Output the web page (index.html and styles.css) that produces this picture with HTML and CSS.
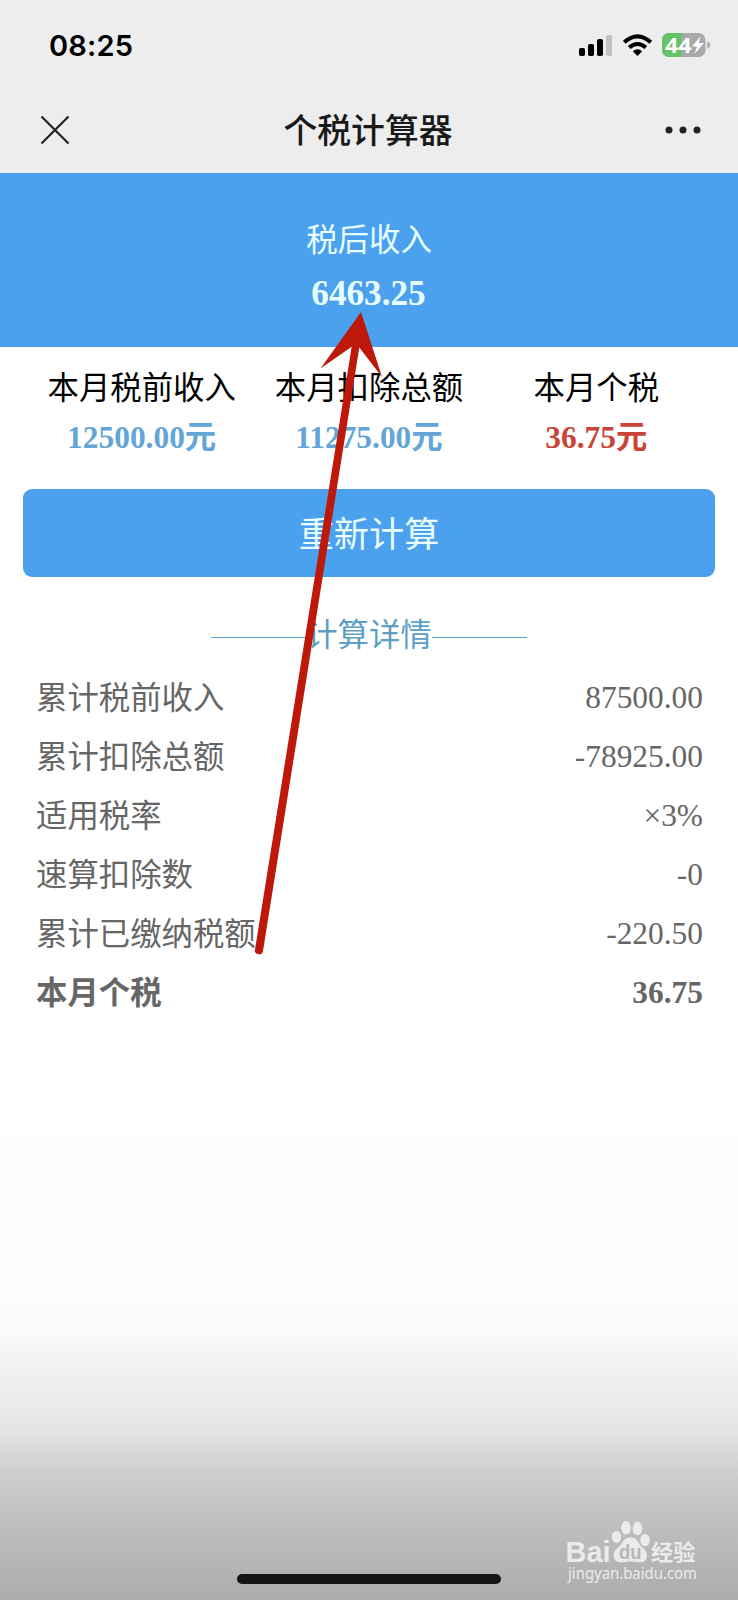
FILE: index.html
```html
<!DOCTYPE html>
<html lang="zh-CN">
<head>
<meta charset="utf-8">
<title>个税计算器</title>
<link rel="stylesheet" href="styles.css">
</head>
<body>
<div class="screen">
  <header class="header">
    <div class="status">
      <span class="time">08:25</span>
      <svg class="status-icons" width="134" height="30" viewBox="0 0 134 30">
        <rect x="1" y="18" width="6" height="8" rx="1.8"/>
        <rect x="10" y="14" width="6" height="12" rx="1.8"/>
        <rect x="19" y="9" width="6" height="17" rx="1.8"/>
        <rect x="28" y="5" width="6" height="21" rx="1.8" fill="#c2c2c2"/>
        <g fill="none" stroke="#000" stroke-width="4">
          <path d="M46.200 12.300Q59.500 .3 72.800 12.300"/>
          <path d="M51.200 17.600Q59.500 10.400 67.800 17.600"/>
        </g>
        <path d="M54.800 21.200Q59.500 17.500 64.200 21.200L59.500 26Z"/>
        <rect x="84" y="3" width="43.500" height="24" rx="7" fill="#a9a9a9"/>
        <path d="M103.500 3H91a7 7 0 0 0-7 7v10a7 7 0 0 0 7 7h12.500z" fill="#66c265"/>
        <path d="M129.300 11.300q3 1.200 3 3.700t-3 3.700z" fill="#a9a9a9"/>
        <text class="battery-text" x="87" y="22.600" textLength="26.500" lengthAdjust="spacingAndGlyphs">44</text>
        <path d="M122.500 6.500L114 16.500H119L116.500 24L126 13H120.800Z" fill="#fff"/>
      </svg>
    </div>
    <div class="navbar">
      <svg class="close" width="30" height="30" viewBox="0 0 30 30"><path d="M1.500 1.500L28.500 28.500M28.500 1.500L1.500 28.500" stroke="#222" stroke-width="2.200"/></svg>
      <h1 class="title">个税计算器</h1>
      <svg class="more" width="36" height="8" viewBox="0 0 36 8" fill="#222"><circle cx="4" cy="4" r="3.500"/><circle cx="18" cy="4" r="3.500"/><circle cx="32" cy="4" r="3.500"/></svg>
    </div>
  </header>
  <section class="income">
    <div class="income-label">税后收入</div>
    <div class="income-value">6463.25</div>
  </section>
  <main class="content">
    <div class="stats">
      <div class="stat"><span>本月税前收入</span><b>12500.00元</b></div>
      <div class="stat"><span>本月扣除总额</span><b>11275.00元</b></div>
      <div class="stat"><span>本月个税</span><b class="tax">36.75元</b></div>
    </div>
    <button class="recalc">重新计算</button>
    <div class="divider">计算详情</div>
    <div class="details">
      <div class="row"><span class="name">累计税前收入</span><span class="amount">87500.00</span></div>
      <div class="row"><span class="name">累计扣除总额</span><span class="amount">-78925.00</span></div>
      <div class="row"><span class="name">适用税率</span><span class="amount">×3%</span></div>
      <div class="row"><span class="name">速算扣除数</span><span class="amount">-0</span></div>
      <div class="row"><span class="name">累计已缴纳税额</span><span class="amount">-220.50</span></div>
      <div class="row total"><span class="name">本月个税</span><span class="amount">36.75</span></div>
    </div>
  </main>
  <svg class="arrow" width="738" height="1000" viewBox="0 0 738 1000"><path d="M361 312L382 377L359.300 347.500L263 951A4 4 0 0 1 255 949.500L351.700 346.700L320.500 368.500Z" fill="#bd1809"/></svg>
  <svg class="watermark" width="140" height="70" viewBox="0 0 140 70" fill="#ebebeb">
    <text class="brand" x="5.500" y="41.500" textLength="45" lengthAdjust="spacingAndGlyphs">Bai</text>
    <ellipse cx="56.500" cy="17" rx="4.700" ry="6"/>
    <ellipse cx="66" cy="7.800" rx="4.800" ry="6.700"/>
    <ellipse cx="77.500" cy="8.500" rx="4.800" ry="6.700"/>
    <ellipse cx="85" cy="20" rx="4.700" ry="6.200"/>
    <path d="M70.500 17.500C63 17.500 62.500 24 57.500 28C51 33 52.500 42.300 61 42.300C65 42.300 67 41.500 70.500 41.500C74 41.500 76 42.300 80 42.300C88.500 42.300 89 33.500 83.500 28.500C78 24 78 17.500 70.500 17.500Z"/>
    <text class="du" x="59" y="39" textLength="22.500" lengthAdjust="spacingAndGlyphs">du</text>
    <text class="experience" x="91" y="40" textLength="44.500" lengthAdjust="spacingAndGlyphs">经验</text>
    <text class="url" x="8" y="59" textLength="129" lengthAdjust="spacingAndGlyphs">jingyan.baidu.com</text>
  </svg>
  <div class="home-bar"></div>
</div>
</body>
</html>
```
FILE: styles.css
```css
* { box-sizing: border-box; }
body { margin: 0; }

.screen {
  position: relative;
  width: 738px;
  height: 1600px;
  overflow: hidden;
  display: flex;
  flex-direction: column;
  font-family: "Liberation Serif", "Noto Sans CJK SC", serif;
  font-size: 31.4px;
  background: linear-gradient(#fff 0, #fff 1020px, #fdfdfd 1290px, #fafafa 1330px, #f2f2f2 1365px, #e9e9e9 1410px, #e2e3e3 1434px, #dadcdb 1444px, #cfd1d1 1470px, #c5c6c6 1500px, #bababa 1542px, #acacac 1600px);
}

.header {
  height: 173px;
  background: #ededed;
  font-family: "Noto Sans CJK SC", sans-serif;
}

.status {
  height: 90px;
  padding: 0 26px 0 49px;
  display: flex;
  justify-content: space-between;
  align-items: center;
}

.time {
  padding-top: 2px;
  font: 600 29px/36px Inter, sans-serif;
  letter-spacing: .2px;
  color: #000;
}

.status-icons { display: block; }

.battery-text {
  font: 700 22px "Open Sans", sans-serif;
  fill: #fff;
}

.navbar {
  height: 80px;
  padding: 0 37px 0 40px;
  display: grid;
  grid-template-columns: 36px 1fr 36px;
  align-items: center;
}

.title {
  margin: -2px 0 0 -5px;
  font-size: 33.8px;
  line-height: 50px;
  font-weight: 500;
  text-align: center;
  color: #191919;
}

.income {
  height: 174px;
  padding-top: 44px;
  background: #4ca1ef;
  color: #e8ffff;
  text-align: center;
}

.income-label { line-height: 48px; }

.income-value {
  margin-left: -1px;
  font-size: 35.2px;
  line-height: 57px;
  font-weight: 700;
}

.content { flex: 1; }

.stats {
  padding: 17px 28px 0;
  display: grid;
  grid-template-columns: repeat(3, 1fr);
}

.stat {
  display: flex;
  flex-direction: column;
  align-items: center;
  line-height: 49px;
  color: #000;
}

.stat b { color: #62a5d6; }
.stat .tax { color: #c84437; }

.recalc {
  display: block;
  width: 692px;
  height: 88px;
  margin: 27px auto 0;
  padding: 0 0 3px;
  border: 0;
  border-radius: 9px;
  background: #4ca1ef;
  color: #e8ffff;
  font: 35.2px/85px "Noto Sans CJK SC", sans-serif;
}

.divider {
  width: 316px;
  margin: 34px auto 0;
  display: flex;
  align-items: center;
  line-height: 50px;
  color: #5b9fc5;
}

.divider::before,
.divider::after {
  content: "";
  flex: 1;
  height: 1px;
  margin-top: 2px;
  background: #5b9fc5;
}

.details { padding: 6px 35px 0 36px; }

.row {
  height: 59px;
  display: flex;
  justify-content: space-between;
  align-items: center;
  color: #666;
}

.name { padding-bottom: 3px; }
.amount { padding-top: 2px; }

.total { font-weight: 700; }

.arrow {
  position: absolute;
  left: 0;
  top: 0;
}

.watermark {
  position: absolute;
  left: 560px;
  top: 1520px;
}

.brand { font: 700 29.5px "Liberation Sans", sans-serif; }
.du { font: 700 20px "Liberation Sans", sans-serif; fill: #b6b6b6; }
.experience { font: 700 22px "Noto Sans CJK SC", sans-serif; }
.url { font: 16px "Noto Sans", sans-serif; }

.home-bar {
  position: absolute;
  left: 237px;
  top: 1574px;
  width: 264px;
  height: 10px;
  border-radius: 5px;
  background: #151515;
}
```
